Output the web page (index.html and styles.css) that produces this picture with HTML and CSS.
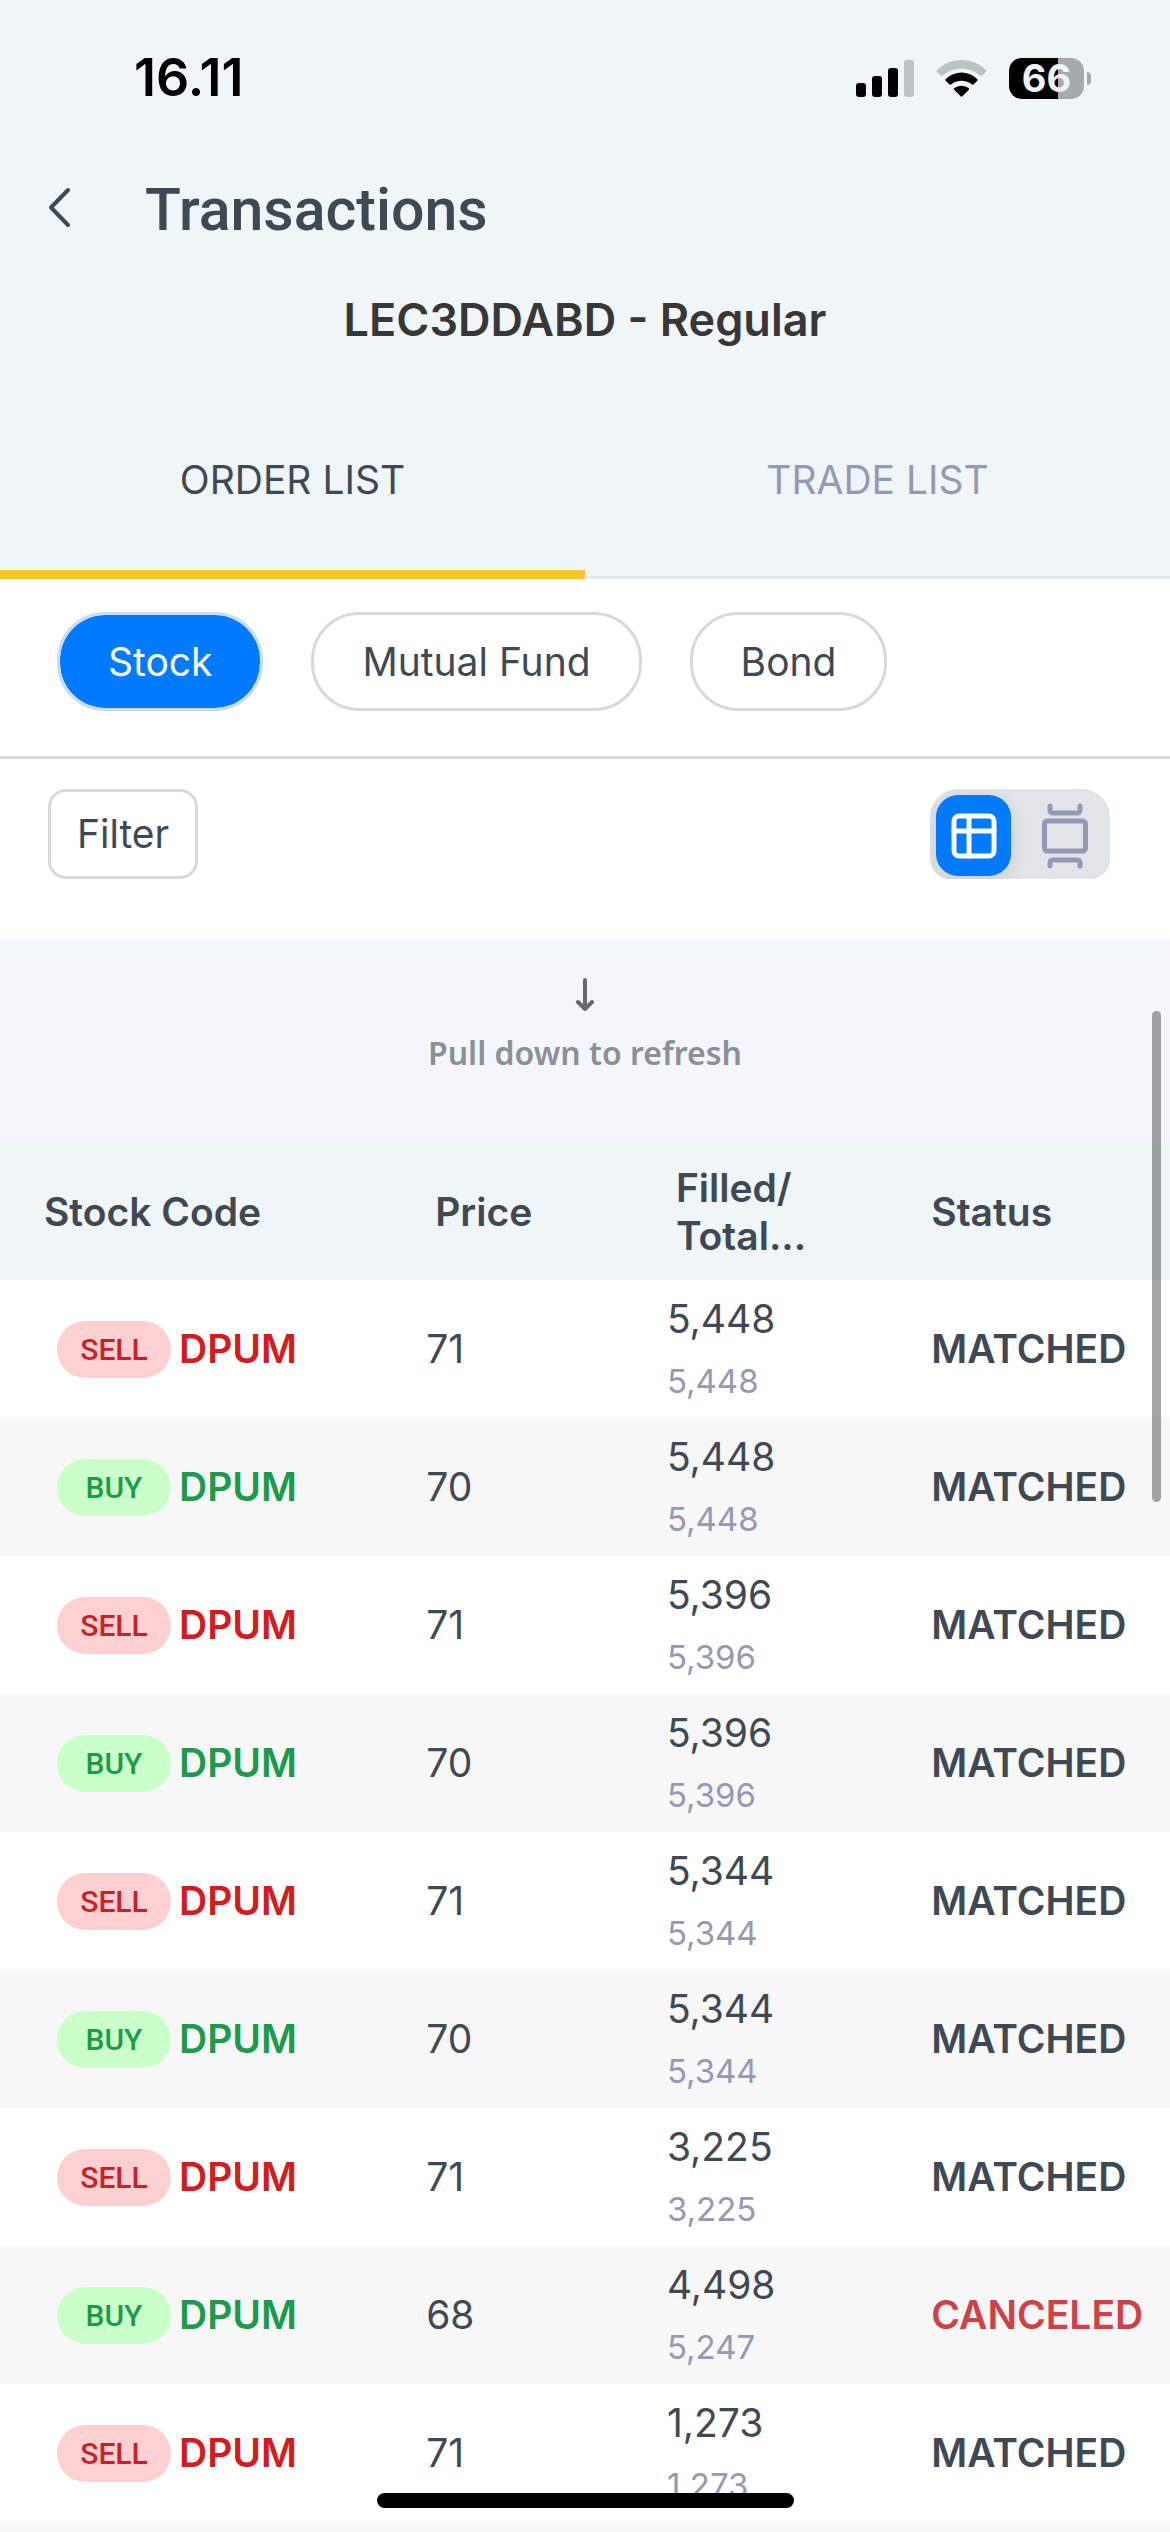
FILE: index.html
```html
<!DOCTYPE html>
<html lang="en">
<head>
<meta charset="utf-8">
<meta name="viewport" content="width=device-width, initial-scale=1">
<title>Transactions</title>
<link rel="stylesheet" href="styles.css">
</head>
<body>
<div class="app">
  <header class="top">
    <div class="status-bar">
      <span class="time">16.11</span>
      <div class="indicators">
        <svg class="signal" width="58" height="37" viewBox="0 0 58 37" aria-hidden="true">
          <rect x="0" y="23" width="10" height="14" rx="3"/>
          <rect x="16" y="16" width="10" height="21" rx="3"/>
          <rect x="32" y="8" width="10" height="29" rx="3"/>
          <rect class="dim" x="48" y="0" width="10" height="37" rx="3"/>
        </svg>
        <svg class="wifi" width="51" height="37" viewBox="0 0 51 37" aria-hidden="true">
          <path class="dim" d="M0.8 10.2Q0 11 0.8 11.8L5 15.8Q5.800 16.500 6.600 15.800C17 6.400 34 6.400 44.400 15.800Q45.200 16.500 46 15.800L50.200 11.800Q51 11 50.200 10.200C36.500-3.400 14.500-3.400 0.800 10.200Z"/>
          <path d="M9.600 19.200Q9 20 9.700 20.700L13.300 24.300Q14.200 25.200 15.100 24.400C21 19.600 30 19.600 35.900 24.400Q36.800 25.200 37.700 24.300L41.300 20.700Q42 20 41.400 19.200C32.500 10.400 18.500 10.400 9.600 19.200Z"/>
          <path d="M18.200 28.300Q17.500 29 18.200 29.700L24.600 36.300Q25.500 37.200 26.400 36.300L32.800 29.700Q33.500 29 32.800 28.300C28.600 24.800 22.400 24.800 18.200 28.300Z"/>
        </svg>
        <div class="battery">
          <span class="battery-level">66</span>
          <span class="battery-tip"></span>
        </div>
      </div>
    </div>
    <div class="title-row">
      <button class="back" type="button" aria-label="Back">
        <svg width="24" height="46" viewBox="0 0 24 46" aria-hidden="true"><path d="M20 3L3 20.500L20 38"/></svg>
      </button>
      <h1 class="title">Transactions</h1>
    </div>
    <p class="account">LEC3DDABD - Regular</p>
    <nav class="tabs" role="tablist">
      <button class="tab tab-active" type="button" role="tab" aria-selected="true">ORDER LIST</button>
      <button class="tab" type="button" role="tab" aria-selected="false">TRADE LIST</button>
    </nav>
  </header>

  <div class="pills">
    <button class="pill pill-active" type="button">Stock</button>
    <button class="pill" type="button">Mutual Fund</button>
    <button class="pill" type="button">Bond</button>
  </div>

  <div class="toolbar">
    <button class="filter" type="button">Filter</button>
    <div class="view-switch">
      <button class="view view-active" type="button" aria-label="Table view">
        <svg width="46" height="46" viewBox="0 0 46 46" aria-hidden="true"><rect x="3" y="3" width="40" height="40" rx="5"/><path d="M3 18H43M18 3V43"/></svg>
      </button>
      <button class="view" type="button" aria-label="Card view">
        <svg width="46" height="66" viewBox="0 0 46 66" aria-hidden="true"><rect x="2.500" y="18" width="41" height="30" rx="3"/><path d="M8 3V7Q8 10 11 10H35Q38 10 38 7V3M8 63V60Q8 57 11 57H35Q38 57 38 60V63"/></svg>
      </button>
    </div>
  </div>

  <main class="list">
    <div class="refresh">
      <svg width="20" height="36" viewBox="0 0 20 36" aria-hidden="true"><path d="M10 5V34M3 27L10 34L17 27"/></svg>
      <span>Pull down to refresh</span>
    </div>
    <table class="orders">
      <colgroup><col class="col-code"><col class="col-price"><col class="col-filled"><col class="col-status"></colgroup>
      <thead>
        <tr><th class="code-head" scope="col">Stock Code</th><th class="price" scope="col">Price</th><th scope="col">Filled/<br>Total...</th><th class="status" scope="col">Status</th></tr>
      </thead>
      <tbody>
        <tr><td><div class="code sell"><span class="badge">SELL</span>DPUM</div></td><td class="price">71</td><td><div class="filled">5,448</div><div class="total">5,448</div></td><td class="status">MATCHED</td></tr>
        <tr><td><div class="code buy"><span class="badge">BUY</span>DPUM</div></td><td class="price">70</td><td><div class="filled">5,448</div><div class="total">5,448</div></td><td class="status">MATCHED</td></tr>
        <tr><td><div class="code sell"><span class="badge">SELL</span>DPUM</div></td><td class="price">71</td><td><div class="filled">5,396</div><div class="total">5,396</div></td><td class="status">MATCHED</td></tr>
        <tr><td><div class="code buy"><span class="badge">BUY</span>DPUM</div></td><td class="price">70</td><td><div class="filled">5,396</div><div class="total">5,396</div></td><td class="status">MATCHED</td></tr>
        <tr><td><div class="code sell"><span class="badge">SELL</span>DPUM</div></td><td class="price">71</td><td><div class="filled">5,344</div><div class="total">5,344</div></td><td class="status">MATCHED</td></tr>
        <tr><td><div class="code buy"><span class="badge">BUY</span>DPUM</div></td><td class="price">70</td><td><div class="filled">5,344</div><div class="total">5,344</div></td><td class="status">MATCHED</td></tr>
        <tr><td><div class="code sell"><span class="badge">SELL</span>DPUM</div></td><td class="price">71</td><td><div class="filled">3,225</div><div class="total">3,225</div></td><td class="status">MATCHED</td></tr>
        <tr><td><div class="code buy"><span class="badge">BUY</span>DPUM</div></td><td class="price">68</td><td><div class="filled">4,498</div><div class="total">5,247</div></td><td class="status canceled">CANCELED</td></tr>
        <tr><td><div class="code sell"><span class="badge">SELL</span>DPUM</div></td><td class="price">71</td><td><div class="filled">1,273</div><div class="total">1,273</div></td><td class="status">MATCHED</td></tr>
        <tr aria-hidden="true"><td></td><td></td><td></td><td></td></tr>
      </tbody>
    </table>
    <div class="scroll-thumb"></div>
  </main>
  <div class="home-bar"></div>
</div>
</body>
</html>
```
FILE: styles.css
```css
* {
  box-sizing: border-box;
}

body {
  margin: 0;
  background: #fff;
  color: #3f4954;
  font-family: Inter, sans-serif;
  font-size: 39px;
  line-height: 48px;
}

button {
  margin: 0;
  padding: 0;
  border: 0;
  background: none;
  color: inherit;
  font: inherit;
  cursor: pointer;
}

svg {
  display: block;
}

.app {
  position: relative;
  display: flex;
  flex-direction: column;
  height: 100vh;
  overflow: hidden;
}

.top {
  background: #f0f5f8;
}

/* Device status bar */
.status-bar {
  display: flex;
  align-items: center;
  justify-content: space-between;
  height: 156px;
  padding: 0 79px 0 134px;
}

.time {
  color: #000;
  font-size: 52px;
  font-weight: 600;
}

.indicators {
  display: flex;
  align-items: center;
  gap: 22px;
}

.dim {
  fill: #bdc2c5;
}

.battery {
  display: flex;
  align-items: center;
  gap: 3px;
}

.battery-level {
  width: 75px;
  border-radius: 13px;
  background: linear-gradient(to right, #000 66%, #a6aaad 66%);
  color: #f0f5f8;
  font-size: 38px;
  font-weight: 700;
  line-height: 41px;
  text-align: center;
}

.battery-tip {
  width: 4px;
  height: 13px;
  border-radius: 0 4px 4px 0;
  background: #a6aaad;
}

/* Title */
.title-row {
  display: flex;
  align-items: center;
  gap: 73px;
  height: 108px;
  padding-left: 48px;
}

.back path {
  fill: none;
  stroke: #3f4954;
  stroke-width: 4;
  stroke-linecap: round;
  stroke-linejoin: round;
}

.title {
  margin: 0;
  font-family: Roboto, sans-serif;
  font-size: 59px;
  font-weight: 500;
  line-height: 72px;
}

.account {
  margin: 0;
  padding: 28px 0 27px;
  color: #373737;
  font-size: 45px;
  font-weight: 600;
  line-height: 56px;
  text-align: center;
}

/* Tabs */
.tabs {
  display: flex;
}

.tab {
  flex: 1;
  height: 204px;
  padding-top: 6px;
  box-shadow: inset 0 -3px #e3e9ef;
  color: #9699b3;
}

.tab-active {
  box-shadow: inset 0 -9px #fcc32c;
  color: #3f4954;
}

/* Category pills */
.pills {
  display: flex;
  gap: 48px;
  padding: 33px 57px 45px;
  border-bottom: 3px solid #d9d9d9;
}

.pill {
  height: 99px;
  padding: 0 48px;
  border: 3px solid #d9d9d9;
  border-radius: 48px;
}

.pill-active {
  border-color: #cbdcec;
  background: #007bff;
  background-clip: padding-box;
  color: #fff;
}

/* Filter and view switch */
.toolbar {
  display: flex;
  justify-content: space-between;
  padding: 30px 60px 60px 48px;
}

.filter {
  height: 90px;
  padding: 0 26px;
  border: 3px solid #d9d9d9;
  border-radius: 18px;
}

.view-switch {
  display: flex;
  gap: 9px;
  width: 180px;
  height: 90px;
  padding: 6px 0 3px 6px;
  overflow: hidden;
  border-radius: 28px 28px 20px 20px;
  background: #e1e5e9;
}

.view {
  display: flex;
  flex: 1;
  align-items: center;
  justify-content: center;
}

.view path,
.view rect {
  fill: none;
  stroke: #9699b3;
  stroke-width: 5;
  stroke-linecap: round;
}

.view-active {
  flex: 0 0 75px;
  border-radius: 22px;
  background: #007bff;
  box-shadow: 0 4px 18px rgba(0, 0, 0, 0.12);
}

.view-active path,
.view-active rect {
  stroke: #fff;
}

/* Order list */
.list {
  position: relative;
  flex: 1;
  min-height: 0;
  overflow: hidden;
}

.refresh {
  display: flex;
  flex-direction: column;
  align-items: center;
  gap: 18px;
  padding: 36px 0 66px;
  background: #f3f6fa;
  color: #8a9096;
  font-family: "Noto Sans", sans-serif;
  font-size: 32px;
  font-weight: 600;
}

.refresh path {
  fill: none;
  stroke: #666a70;
  stroke-width: 4;
  stroke-linecap: round;
  stroke-linejoin: round;
}

.orders {
  width: 100%;
  border-collapse: collapse;
  table-layout: fixed;
}

.col-code {
  width: 36%;
}

.col-price {
  width: 21%;
}

.col-filled {
  width: 22%;
}

th {
  height: 137px;
  padding: 0 0 0 9px;
  background: #f0f5f8;
  font-weight: 600;
  text-align: left;
}

th.code-head {
  padding-left: 44px;
}

th.price {
  padding-left: 14px;
}

td {
  height: 138px;
  padding: 0;
}

td.price {
  padding-left: 5px;
}

th.status,
td.status {
  padding-left: 7px;
  font-weight: 600;
}

tbody tr:nth-child(even) {
  background: #f7f7f7;
}

.code {
  display: flex;
  align-items: center;
  gap: 8px;
  padding-left: 57px;
  font-weight: 600;
}

.badge {
  width: 114px;
  border-radius: 28px;
  font-family: Roboto, sans-serif;
  font-size: 30px;
  font-weight: 500;
  line-height: 57px;
  text-align: center;
}

.sell {
  color: #d41c20;
}

.sell .badge {
  background: #ffd0d1;
  color: #c92127;
}

.buy {
  color: #1b9b4b;
}

.buy .badge {
  background: #caffca;
}

.filled {
  line-height: 64px;
}

.total {
  color: #9699b3;
  font-size: 33px;
  line-height: 60px;
}

td.canceled {
  color: #cf4146;
}

.scroll-thumb {
  position: absolute;
  top: 72px;
  right: 9px;
  width: 9px;
  height: 491px;
  border-radius: 5px;
  background: rgba(0, 0, 0, 0.35);
}

.home-bar {
  position: absolute;
  bottom: 24px;
  left: 50%;
  width: 417px;
  height: 15px;
  margin-left: -208px;
  border-radius: 8px;
  background: #000;
}
```
